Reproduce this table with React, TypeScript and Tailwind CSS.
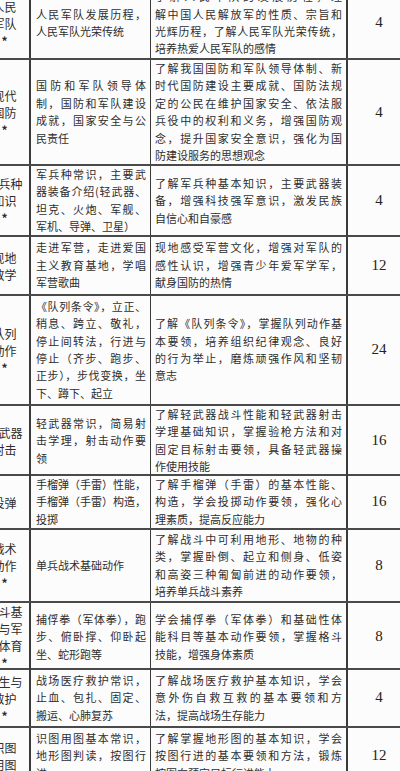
const rows = [
  {
    h: "h-[72px]",
    a: ["人民", "军队", "*"],
    b: ["人民军队发展历程，", "人民军队光荣传统"],
    c: ["了解人民军队的发展历程，理", "解中国人民解放军的性质、宗旨和", "光辉历程，了解人民军队光荣传统，", "培养热爱人民军队的感情"],
    n: "4",
  },
  {
    h: "h-[106px]",
    a: ["现代", "国防", "*"],
    b: ["国防和军队领导体", "制，国防和军队建设", "成就，国家安全与公", "民责任"],
    c: ["了解我国国防和军队领导体制、新", "时代国防建设主要成就、国防法规", "定的公民在维护国家安全、依法服", "兵役中的权利和义务，增强国防观", "念，提升国家安全意识，强化为国", "防建设服务的思想观念"],
    n: "4",
  },
  {
    h: "h-[71px]",
    a: ["军兵种", "知识", "*"],
    b: ["军兵种常识，主要武", "器装备介绍(轻武器、", "坦克、火炮、军舰、", "军机、导弹、卫星）"],
    c: ["了解军兵种基本知识，主要武器装", "备，增强科技强军意识，激发民族", "自信心和自豪感"],
    n: "4",
  },
  {
    h: "h-[59px]",
    a: ["现地", "教学"],
    b: ["走进军营，走进爱国", "主义教育基地，学唱", "军营歌曲"],
    c: ["现地感受军营文化，增强对军队的", "感性认识，增强青少年爱军学军，", "献身国防的热情"],
    n: "12",
  },
  {
    h: "h-[110px]",
    a: ["队列", "动作", "*"],
    b: ["《队列条令》，立正、", "稍息、跨立、敬礼，", "停止间转法，行进与", "停止（齐步、跑步、", "正步），步伐变换，坐", "下、蹲下、起立"],
    c: ["了解《队列条令》，掌握队列动作基", "本要领，培养组织纪律观念、良好", "的行为举止，磨炼顽强作风和坚韧", "意志"],
    n: "24",
  },
  {
    h: "h-[70px]",
    a: ["轻武器", "射击"],
    b: ["轻武器常识，简易射", "击学理，射击动作要", "领"],
    c: ["了解轻武器战斗性能和轻武器射击", "学理基础知识，掌握验枪方法和对", "固定目标射击要领，具备轻武器操", "作使用技能"],
    n: "16",
  },
  {
    h: "h-[54px]",
    a: ["投弹"],
    b: ["手榴弹（手雷）性能，", "手榴弹（手雷）构造，", "投掷"],
    c: ["了解手榴弹（手雷）的基本性能、", "构造，学会投掷动作要领，强化心", "理素质，提高反应能力"],
    n: "16",
  },
  {
    h: "h-[73px]",
    a: ["战术", "动作", "*"],
    b: ["单兵战术基础动作"],
    c: ["了解战斗中可利用地形、地物的种", "类，掌握卧倒、起立和侧身、低姿", "和高姿三种匍匐前进的动作要领，", "培养单兵战斗素养"],
    n: "8",
  },
  {
    h: "h-[67px]",
    a: ["格斗基", "础与军", "事体育", "*"],
    b: ["捕俘拳（军体拳），跑", "步、俯卧撑、仰卧起", "坐、蛇形跑等"],
    c: ["学会捕俘拳（军体拳）和基础性体", "能科目等基本动作要领，掌握格斗", "技能，增强身体素质"],
    n: "8",
  },
  {
    h: "h-[58px]",
    a: ["卫生与", "救护", "*"],
    b: ["战场医疗救护常识，", "止血、包扎、固定、", "搬运、心肺复苏"],
    c: ["了解战场医疗救护基本知识，学会", "意外伤自救互救的基本要领和方", "法，提高战场生存能力"],
    n: "4",
  },
  {
    h: "h-[58px]",
    a: ["识图", "用图"],
    b: ["识图用图基本常识，", "地形图判读，按图行", "进"],
    c: ["了解掌握地形图的基本知识，学会", "按图行进的基本要领和方法，锻炼", "按图向预定目标行进能力"],
    n: "12",
  },
]

function Lines({ lines }: { lines: string[] }) {
  return (
    <div className="w-full">
      {lines.map((l, i) => (
        <div
          key={i}
          className={`whitespace-nowrap ${i < lines.length - 1 ? "text-justify [text-align-last:justify]" : ""}`}
        >
          {l}
        </div>
      ))}
    </div>
  )
}

export default function App() {
  return (
    <div className="h-[771px] w-[400px] overflow-hidden bg-[#fcfcfc]">
      <div
        className="-ml-[20px] -mt-[12px] w-[430px] text-[11px] leading-[17.4px] text-[#2e2e2e]"
        style={{ fontFamily: '"Noto Sans CJK SC", "Noto Sans", sans-serif' }}
      >
        {rows.map((r, i) => (
          <div key={i} className={`grid grid-cols-[51px_120px_197px_62px] border-b-2 border-[#4a4a4a] ${r.h}`}>
            <div className="flex flex-col items-center justify-center border-r-2 border-[#3a3a3a] text-[12px] leading-[17px]">
              {r.a.map((t, j) => (
                <div key={j} className={`whitespace-nowrap ${t === "*" ? "font-bold" : ""}`}>{t}</div>
              ))}
            </div>
            <div className="flex items-center border-r border-[#3a3a3a] pl-[5px] pr-[4px]">
              <Lines lines={r.b} />
            </div>
            <div className="flex items-center border-r-2 border-[#3a3a3a] pl-[4px] pr-[4px]">
              <Lines lines={r.c} />
            </div>
            <div className="flex items-center justify-center text-[15px] text-[#222]" style={{ fontFamily: '"Liberation Serif", serif' }}>
              {r.n}
            </div>
          </div>
        ))}
      </div>
    </div>
  )
}
